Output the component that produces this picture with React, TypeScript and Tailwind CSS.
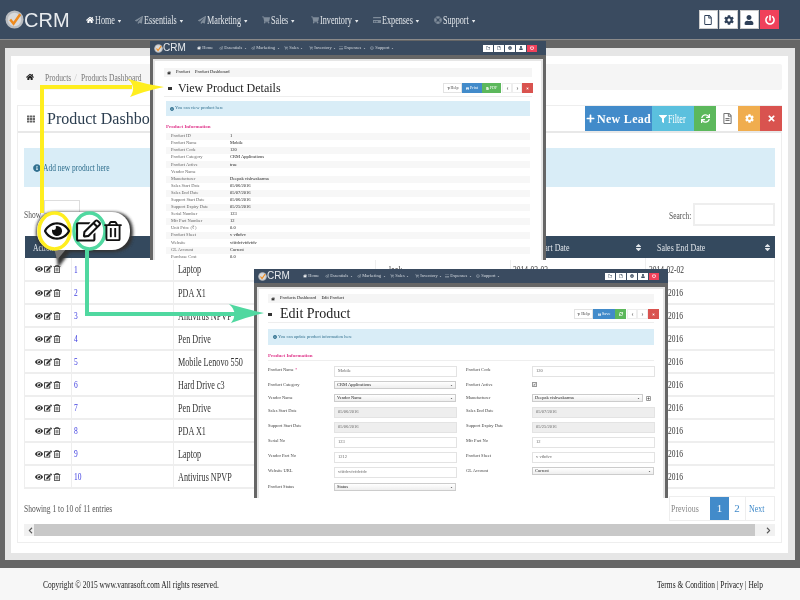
import type { ReactNode } from "react"
import clsx from "clsx"
import {
  FaCaretDown,
  FaChevronLeft,
  FaChevronRight,
  FaCog,
  FaCreditCard,
  FaEdit,
  FaEye,
  FaFilePdf,
  FaFilter,
  FaHome,
  FaInfoCircle,
  FaLifeRing,
  FaPaperPlane,
  FaPlus,
  FaPowerOff,
  FaPrint,
  FaQuestion,
  FaRegEdit,
  FaRegEye,
  FaRegFile,
  FaRegFileAlt,
  FaRegFolder,
  FaRegPlusSquare,
  FaRegTrashAlt,
  FaSave,
  FaShoppingCart,
  FaSort,
  FaSync,
  FaTh,
  FaTimes,
  FaUser,
} from "react-icons/fa"

// squeezed text, the reference's body text is scaled down horizontally
function Sq({ children, className }: { children: ReactNode; className?: string }) {
  return <span className={clsx("inline-block origin-left scale-x-[0.68] whitespace-nowrap", className)}>{children}</span>
}

function Logo({ small }: { small?: boolean }) {
  const size = small ? 9 : 19
  return (
    <div className="flex items-center">
      <svg width={size} height={size} viewBox="0 0 20 20">
        <circle cx="10" cy="10" r="9.5" fill="#b9bcc0" />
        <circle cx="10" cy="10" r="7" fill="#d9dadb" />
        <path d="M5.5 10l3.5 4.5L16 4.5" fill="none" stroke="#ef8a1d" strokeWidth="2.6" />
      </svg>
      <span className={clsx("font-['Liberation_Sans',sans-serif] text-[#e8ebee] leading-none", small ? "text-[10px]" : "text-[20px]")}>CRM</span>
    </div>
  )
}

const mainNav = [
  { label: "Home", Icon: FaHome, w: "w-[49px]", iconCls: "text-white" },
  { label: "Essentials", Icon: FaPaperPlane, w: "w-[63px]", iconCls: "text-[#7f8c9a]" },
  { label: "Marketing", Icon: FaPaperPlane, w: "w-[64px]", iconCls: "text-[#7f8c9a]" },
  { label: "Sales", Icon: FaShoppingCart, w: "w-[49px]", iconCls: "text-[#7f8c9a]" },
  { label: "Inventory", Icon: FaShoppingCart, w: "w-[62px]", iconCls: "text-[#7f8c9a]" },
  { label: "Expenses", Icon: FaCreditCard, w: "w-[61px]", iconCls: "text-[#7f8c9a]" },
  { label: "Support", Icon: FaLifeRing, w: "w-[38px]", iconCls: "text-[#7f8c9a]" },
]

const miniNav = [
  { label: "Home", Icon: FaHome, caret: false, w: "w-[22px]" },
  { label: "Essentials", Icon: FaPaperPlane, caret: true, w: "w-[32px]" },
  { label: "Marketing", Icon: FaPaperPlane, caret: true, w: "w-[33px]" },
  { label: "Sales", Icon: FaShoppingCart, caret: true, w: "w-[25px]" },
  { label: "Inventory", Icon: FaShoppingCart, caret: true, w: "w-[30px]" },
  { label: "Expenses", Icon: FaCreditCard, caret: true, w: "w-[31px]" },
  { label: "Support", Icon: FaLifeRing, caret: true, w: "w-[24px]" },
]

function MiniHeader({ navCls }: { navCls: string }) {
  return (
    <div className="h-[14px] shrink-0 bg-[#3a4b60] flex items-center pl-[4px] pr-[9px]">
      <Logo small />
      <div className={clsx("flex items-center text-[4.5px] text-[#d5dae0]", navCls)}>
        {miniNav.map(({ label, Icon, caret, w }) => (
          <span key={label} className={clsx("flex items-center gap-[1.5px] whitespace-nowrap", w)}>
            <Icon size={4} className={label === "Home" ? "text-white" : "text-[#7f8c9a]"} />
            {label}
            {caret && <FaCaretDown size={3} />}
          </span>
        ))}
      </div>
      <div className="ml-auto flex items-center gap-[1px]">
        {[FaRegFolder, FaRegFile, FaCog, FaUser].map((Icon, i) => (
          <span key={i} className="w-[10px] h-[7px] bg-white flex items-center justify-center text-[#3a4b60]">
            <Icon size={4} />
          </span>
        ))}
        <span className="w-[10px] h-[7px] bg-[#f0415b] flex items-center justify-center text-white">
          <FaPowerOff size={4} />
        </span>
      </div>
    </div>
  )
}

const products = [
  ["1", "Laptop"],
  ["2", "PDA X1"],
  ["3", "Antivirus NPVP"],
  ["4", "Pen Drive"],
  ["5", "Mobile Lenovo 550"],
  ["6", "Hard Drive c3"],
  ["7", "Pen Drive"],
  ["8", "PDA X1"],
  ["9", "Laptop"],
  ["10", "Antivirus NPVP"],
]

const details = [
  ["Product ID", "1"],
  ["Product Name", "Mobile"],
  ["Product Code", "120"],
  ["Product Category", "CRM Applications"],
  ["Product Active", "true"],
  ["Vendor Name", ""],
  ["Manufacturer", "Deepak vishwakarma"],
  ["Sales Start Date", "05/06/2016"],
  ["Sales End Date", "05/07/2016"],
  ["Support Start Date", "05/06/2016"],
  ["Support Expiry Date", "05/25/2016"],
  ["Serial Number", "123"],
  ["Mfr Part Number", "12"],
  ["Unit Price (₹)", "0.0"],
  ["Product Sheet", "v vfbdvv"],
  ["Website", "vfifdvfvfdvfdv"],
  ["GL Account", "Current"],
  ["Purchase Cost", "0.0"],
]

function ViewWindow() {
  return (
    <div className="absolute left-[150px] top-[41px] w-[396px] h-[219px] flex flex-col">
      <MiniHeader navCls="ml-[11px]" />
      <div className="flex-1 bg-[#666] pt-[4px] px-[3px] min-h-0">
        <div className="h-full bg-[#e6e6e6] pt-[2px] px-[2px]">
          <div className="h-full bg-white px-[9px] pt-[7px] overflow-hidden text-[#444]">
            <div className="h-[9px] bg-[#f5f5f5] flex items-center gap-[5px] pl-[3px] text-[4.5px] text-[#222]">
              <FaHome size={4} />
              <span>Product</span>
              <span>Product Dashboard</span>
            </div>
            <div className="h-[17px] mt-[3px] flex items-center justify-between border-b border-[#eee]">
              <div className="flex items-center">
                <span className="w-[4px] h-[3px] bg-[#333] ml-[4px] mr-[6px]" />
                <span className="text-[12px] text-[#222] leading-none">View Product Details</span>
              </div>
              <div className="flex items-center h-[10px] text-[4px] mr-[-1px]">
                <span className="w-[19px] h-full border border-[#e3e3e3] flex items-center justify-center gap-[1px]"><FaQuestion size={3} />Help</span>
                <span className="w-[20px] h-full bg-[#428bca] text-white flex items-center justify-center gap-[1px]"><FaPrint size={3} />Print</span>
                <span className="w-[19px] h-full bg-[#5cb85c] text-white flex items-center justify-center gap-[1px]"><FaFilePdf size={3} />PDF</span>
                <span className="ml-[1px] w-[10px] h-full border border-[#eee] flex items-center justify-center"><FaChevronLeft size={3} /></span>
                <span className="w-[10px] h-full border border-[#eee] flex items-center justify-center"><FaChevronRight size={3} /></span>
                <span className="w-[11px] h-full bg-[#d9534f] text-white flex items-center justify-center"><FaTimes size={3} /></span>
              </div>
            </div>
            <div className="mx-[2px]">
              <div className="h-[15px] mt-[4px] bg-[#d9edf7] flex items-center gap-[1px] pl-[4px] text-[4.5px] text-[#31708f]">
                <FaInfoCircle size={4} />
                You can view product here
              </div>
              <div className="mt-[8px] text-[5px] font-bold text-[#e0388c] leading-[6px]">Product Information</div>
              <div className="mt-[3px] text-[4.5px]">
                {details.map(([k, v], i) => (
                  <div key={k} className={clsx("h-[7.1px] flex items-center pl-[5px]", i % 2 === 0 ? "bg-[#f7f7f7]" : "bg-white")}>
                    <span className="w-[59px] text-[#666]">{k}</span>
                    <span className="text-[#222]">{v}</span>
                  </div>
                ))}
              </div>
            </div>
          </div>
        </div>
      </div>
    </div>
  )
}

function Field({ label, value, kind, req, wide }: { label: string; value?: string; kind?: "select" | "off" | "check"; req?: boolean; wide?: boolean }) {
  return (
    <div className="flex items-start">
      <span className="w-[66px] pt-[1px] text-[#444]">
        {label}
        {req && <span className="text-[#e0388c]"> *</span>}
      </span>
      {kind === "check" ? (
        <span className="w-[5px] h-[5px] mt-[1px] bg-[#eee] border border-[#999] text-[4px] leading-[3px] text-[#222]">✓</span>
      ) : kind === "select" ? (
        <div className="flex items-center gap-[3px]">
          <span className={clsx("h-[8px] border border-[#ccc] bg-gradient-to-b from-white to-[#eee] flex items-center justify-between px-[2px] text-[#222]", wide ? "w-[111px]" : "w-[122px]")}>
            {value}
            <FaCaretDown size={3} />
          </span>
          {wide && <FaRegPlusSquare size={5} className="text-[#333]" />}
        </div>
      ) : (
        <span className={clsx("w-[123px] h-[11px] border border-[#e3e3e3] flex items-center px-[3px] text-[#666]", kind === "off" && "bg-[#eee]")}>{value}</span>
      )}
    </div>
  )
}

const formRows: { h: string; left: Parameters<typeof Field>[0]; right?: Parameters<typeof Field>[0] }[] = [
  { h: "h-[15px]", left: { label: "Product Name", value: "Mobile", req: true }, right: { label: "Product Code", value: "120" } },
  { h: "h-[13px]", left: { label: "Product Category", value: "CRM Applications", kind: "select" }, right: { label: "Product Active", kind: "check" } },
  { h: "h-[13px]", left: { label: "Vendor Name", value: "Vendor Name", kind: "select" }, right: { label: "Manufacturer", value: "Deepak vishwakarma", kind: "select", wide: true } },
  { h: "h-[15px]", left: { label: "Sales Start Date", value: "05/06/2016", kind: "off" }, right: { label: "Sales End Date", value: "05/07/2016", kind: "off" } },
  { h: "h-[15px]", left: { label: "Support Start Date", value: "05/06/2016", kind: "off" }, right: { label: "Support Expiry Date", value: "05/25/2016", kind: "off" } },
  { h: "h-[15px]", left: { label: "Serial No", value: "123" }, right: { label: "Mfr Part No", value: "12" } },
  { h: "h-[15px]", left: { label: "Vendor Part No", value: "1212" }, right: { label: "Product Sheet", value: "v vfbdvv" } },
  { h: "h-[16px]", left: { label: "Website URL", value: "vfifdvvfvfdvfdv" }, right: { label: "GL Account", value: "Current", kind: "select" } },
  { h: "h-[10px]", left: { label: "Product Status", value: "Status", kind: "select" } },
]

function EditWindow() {
  return (
    <div className="absolute left-[254px] top-[269px] w-[414px] h-[229px] flex flex-col">
      <MiniHeader navCls="ml-[13px]" />
      <div className="flex-1 bg-[#666] pt-[4px] px-[3px] min-h-0">
        <div className="h-full bg-[#e6e6e6] pt-[2px] px-[2px]">
          <div className="h-full bg-white px-[9px] pt-[5px] overflow-hidden text-[#444]">
            <div className="h-[9px] bg-[#f5f5f5] flex items-center gap-[5px] pl-[3px] text-[4.5px] text-[#222]">
              <FaHome size={4} />
              <span>Products Dashboard</span>
              <span>Edit Product</span>
            </div>
            <div className="h-[17px] mt-[3px] flex items-center justify-between border-b border-[#eee]">
              <div className="flex items-center">
                <span className="w-[4px] h-[3px] bg-[#333] mr-[8px]" />
                <span className="text-[14px] text-[#222] leading-none">Edit Product</span>
              </div>
              <div className="flex items-center h-[10px] text-[4.5px] mr-[-5px]">
                <span className="w-[19px] h-full border border-[#e3e3e3] flex items-center justify-center gap-[1px]"><FaQuestion size={3} />Help</span>
                <span className="w-[22px] h-full bg-[#428bca] text-white flex items-center justify-center gap-[1px]"><FaSave size={3} />Save</span>
                <span className="w-[11px] h-full bg-[#5cb85c] text-white flex items-center justify-center"><FaSync size={4} /></span>
                <span className="ml-[1px] w-[10px] h-full border border-[#eee] flex items-center justify-center"><FaChevronLeft size={3} /></span>
                <span className="w-[11px] h-full border border-[#eee] flex items-center justify-center"><FaChevronRight size={3} /></span>
                <span className="w-[11px] h-full bg-[#d9534f] text-white flex items-center justify-center"><FaTimes size={3} /></span>
              </div>
            </div>
            <div className="h-[16px] mt-[6px] bg-[#d9edf7] flex items-center gap-[1px] pl-[5px] text-[4.5px] text-[#31708f]">
              <FaInfoCircle size={4} />
              You can update product information here
            </div>
            <div className="mt-[8px] pb-[1px] text-[5px] font-bold text-[#e0388c] leading-[6px] border-b border-[#eee]">Product Information</div>
            <div className="mt-[5px] text-[4.5px]">
              {formRows.map((row) => (
                <div key={row.left.label} className={clsx("grid grid-cols-[198px_1fr]", row.h)}>
                  <Field {...row.left} />
                  {row.right && <Field {...row.right} />}
                </div>
              ))}
            </div>
          </div>
        </div>
      </div>
    </div>
  )
}

function Callouts() {
  return (
    <svg className="absolute left-0 top-0" width="800" height="600" viewBox="0 0 800 600">
      <defs>
        <filter id="soft" x="-20%" y="-20%" width="140%" height="140%">
          <feGaussianBlur stdDeviation="1.6" />
        </filter>
      </defs>
      {/* bubble */}
      <path d="M56 250L58 268L70 252H112Q133 252 133 233Q133 212 112 212H56Q36 212 36 233Q36 250 56 250Z" fill="#333" filter="url(#soft)" />
      <path d="M54 248L57 260L67 248Z" fill="#777" />
      <rect x="37" y="212" width="93" height="38" rx="18" fill="#fff" />
      <ellipse cx="54.5" cy="231" rx="15.5" ry="18" fill="#fff" stroke="#ffee1f" strokeWidth="3.5" />
      <ellipse cx="89.5" cy="231" rx="15.5" ry="18" fill="#fff" stroke="#50d8a0" strokeWidth="3.5" />
      <FaRegEye x={44} y={218} size={26} color="#111" />
      <FaRegEdit x={76} y={218} size={25} color="#111" />
      <FaRegTrashAlt x={103} y={221} size={20} color="#111" />
      {/* yellow arrow to the view window */}
      <path d="M42 213V87H132" fill="none" stroke="#ffee1f" strokeWidth="4" />
      <path d="M128 79Q145 84 164 87Q145 91 130 97Q137 87 128 79Z" fill="#ffee1f" />
      {/* green arrow to the edit window */}
      <path d="M87 250V314H235" fill="none" stroke="#50d8a0" strokeWidth="4" />
      <path d="M229 304Q246 309 264 313Q246 317 231 323Q239 313 229 304Z" fill="#50d8a0" />
    </svg>
  )
}

export default function App() {
  return (
    <div className="relative w-[800px] h-[600px] overflow-hidden flex flex-col font-['Liberation_Serif',serif] text-[#333] blur-[0.45px]">
      {/* Top bar */}
      <header className="h-[40px] shrink-0 bg-[#3a4b60] border-b border-[#8a8a8a] flex items-center pl-[5px] pr-[21px]">
        <Logo />
        <nav className="ml-[16px] flex items-center text-[12px] text-[#e2e6ea]">
          {mainNav.map(({ label, Icon, w, iconCls }) => (
            <div key={label} className={clsx("flex items-center", w)}>
              <Icon size={8} className={clsx("shrink-0", iconCls)} />
              <Sq className="ml-[1px] scale-x-[0.64]">
                {label} <FaCaretDown size={8} className="inline" />
              </Sq>
            </div>
          ))}
        </nav>
        <div className="ml-auto flex items-center gap-[1.5px]">
          {[FaRegFile, FaCog, FaUser].map((Icon, i) => (
            <span key={i} className="w-[19px] h-[19px] bg-white border border-[#ccc] flex items-center justify-center text-[#2f4058]">
              <Icon size={10} />
            </span>
          ))}
          <span className="w-[19px] h-[19px] bg-[#f0415b] flex items-center justify-center text-white">
            <FaPowerOff size={10} />
          </span>
        </div>
      </header>

      {/* Page frame */}
      <main className="flex-1 min-h-0 bg-[#666] px-[5px] pt-[8px] pb-[8px]">
        <div className="h-full bg-[#e6e6e6] pl-[6px] pr-[7px] pt-[8px] pb-[7px]">
          <div className="h-full bg-white px-[6px] pt-[8px] flex flex-col">
            <div className="h-[26px] shrink-0 bg-[#f5f5f5] rounded-[2px] flex items-center pl-[9px] text-[11px] text-[#777]">
              <FaHome size={8} className="text-[#222]" />
              <Sq className="ml-[11px] w-[25px] scale-x-[0.64]">Products</Sq>
              <span className="ml-[4px] text-[#ccc]">/</span>
              <Sq className="ml-[4px] scale-x-[0.65]">Products Dashboard</Sq>
            </div>

            <div className="mt-[15px] h-[438px] shrink-0 border border-[#eee] flex flex-col">
              {/* Panel heading */}
              <div className="h-[27px] shrink-0 flex items-center justify-between border-b-2 border-[#e8e8e8]">
                <div className="flex items-center pl-[9px]">
                  <FaTh size={8} className="text-[#666]" />
                  <span className="ml-[12px] text-[16px] text-[#2c3e50] leading-none">Product Dashboard</span>
                </div>
                <div className="flex h-full text-white -mr-px">
                  <span className="w-[67px] bg-[#428bca] flex items-center justify-center gap-[2px] text-[12px] font-bold tracking-[0.3px]"><FaPlus size={9} />New Lead</span>
                  <span className="w-[42px] bg-[#5bc0de] flex items-center pl-[7px] gap-[1px] text-[12px]"><FaFilter size={8} /><Sq className="scale-x-[0.8]">Filter</Sq></span>
                  <span className="w-[22px] bg-[#5cb85c] flex items-center justify-center"><FaSync size={9} /></span>
                  <span className="w-[22px] bg-white flex items-center justify-center text-[#777]"><FaRegFileAlt size={11} /></span>
                  <span className="w-[22px] bg-[#f0ad4e] flex items-center justify-center"><FaCog size={9} /></span>
                  <span className="w-[22px] bg-[#d9534f] flex items-center justify-center"><FaTimes size={9} /></span>
                </div>
              </div>

              {/* Panel body */}
              <div className="flex-1 px-[6px] min-h-0">
                <div className="mt-[15px] h-[39px] bg-[#d9edf7] flex items-center pl-[9px] text-[11px] text-[#31708f]">
                  <FaInfoCircle size={8} />
                  <Sq className="ml-[2px] scale-x-[0.64]">Add new product here</Sq>
                </div>

                <div className="h-[49px] flex justify-between pt-[16px] text-[11px] text-[#555]">
                  <div className="flex items-start">
                    <Sq className="mt-[3px] w-[19px]">Show</Sq>
                    <span className="ml-[1px] -mt-[3px] w-[36px] h-[14px] border border-[#ddd]" />
                  </div>
                  <div className="flex items-start">
                    <Sq className="mt-[4px] w-[24px]">Search:</Sq>
                    <span className="w-[82px] h-[23px] border-2 border-[#eee]" />
                  </div>
                </div>

                <table className="w-full table-fixed border-collapse text-[11px]">
                  <colgroup>
                    <col className="w-[47px]" />
                    <col className="w-[102px]" />
                    <col className="w-[202px]" />
                    <col className="w-[135px]" />
                    <col className="w-[135px]" />
                    <col />
                  </colgroup>
                  <thead>
                    <tr className="h-[22px] bg-[#34495e] text-[#dfe4e9] text-left">
                      <th className="font-normal pl-[8px]"><Sq>Action</Sq></th>
                      <th />
                      <th />
                      <th />
                      <th className="font-normal pl-[8px]">
                        <div className="flex items-center justify-between pr-[3px]"><Sq className="scale-x-[0.72] w-[64px]">Sales Start Date</Sq><FaSort size={9} /></div>
                      </th>
                      <th className="font-normal pl-[11px]">
                        <div className="flex items-center justify-between pr-[3px]"><Sq className="scale-x-[0.72] w-[64px]">Sales End Date</Sq><FaSort size={9} /></div>
                      </th>
                    </tr>
                  </thead>
                  <tbody>
                    {products.map(([id, name], i) => (
                      <tr key={id} className="h-[23px] border-b-2 border-[#eee]">
                        <td className="border-x border-[#eee]">
                          <div className="flex items-center justify-center gap-[1px] text-[#333]">
                            <FaEye size={8} />
                            <FaEdit size={8} />
                            <FaRegTrashAlt size={8} />
                          </div>
                        </td>
                        <td className="border-r border-[#eee] pl-[2px] text-[#3d3de0]"><Sq className="scale-x-[0.8]">{id}</Sq></td>
                        <td className="border-r border-[#eee] pl-[4px]"><Sq className="text-[12px] scale-x-[0.6]">{name}</Sq></td>
                        <td className="border-r border-[#eee] pl-[13px]">{i === 0 && <Sq>look</Sq>}</td>
                        <td className="border-r border-[#eee] pl-[2px]">{i === 0 && <Sq>2014-02-03</Sq>}</td>
                        <td className="border-r border-[#eee] pl-[3px]"><Sq>{i === 0 ? "2014-02-02" : "05/07/2016"}</Sq></td>
                      </tr>
                    ))}
                  </tbody>
                </table>

                <div className="mt-[7px] h-[25px] flex items-center justify-between text-[11px] text-[#555]">
                  <Sq className="scale-x-[0.64]">Showing 1 to 10 of 11 entries</Sq>
                  <div className="flex h-full border border-[#eee]">
                    <span className="w-[40px] flex items-center justify-center text-[#888]"><Sq className="origin-center scale-x-[0.72]">Previous</Sq></span>
                    <span className="w-[19px] bg-[#428bca] text-white flex items-center justify-center">1</span>
                    <span className="w-[17px] border-r border-[#eee] text-[#428bca] flex items-center justify-center">2</span>
                    <span className="w-[28px] text-[#428bca] flex items-center justify-center"><Sq className="origin-center scale-x-[0.72]">Next</Sq></span>
                  </div>
                </div>

                <div className="mt-[3px] h-[12px] bg-[#f1f1f1] flex items-center px-[3px] text-[#555]">
                  <FaChevronLeft size={7} />
                  <span className="w-[721px] h-full bg-[#c8c8c8]" />
                  <FaChevronRight size={7} className="ml-auto" />
                </div>
              </div>
            </div>
          </div>
        </div>
      </main>

      {/* Footer */}
      <footer className="h-[32px] shrink-0 bg-[#f7f7f7] flex items-center justify-between pl-[43px] text-[11px] text-[#222]">
        <Sq className="scale-x-[0.65]">Copyright © 2015 www.vanrasoft.com All rights reserved.</Sq>
        <Sq className="w-[143px] scale-x-[0.64]">Terms &amp; Condition | Privacy | Help</Sq>
      </footer>

      {/* Screenshots pasted over the page, with their callouts */}
      <ViewWindow />
      <EditWindow />
      <Callouts />
    </div>
  )
}
